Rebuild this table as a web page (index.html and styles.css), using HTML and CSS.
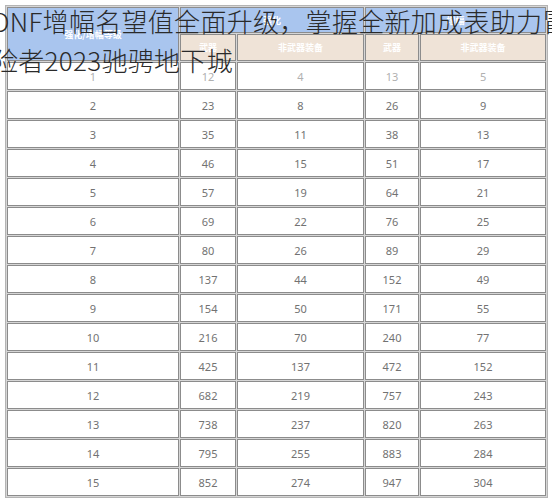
FILE: index.html
```html
<!DOCTYPE html>
<html lang="zh-CN">
<head>
<meta charset="utf-8">
<title>DNF增幅名望值</title>
<link rel="stylesheet" href="styles.css">
</head>
<body>
<div class="shot">
  <table class="grid">
    <colgroup>
      <col class="c1"><col class="c2"><col class="c3"><col class="c4"><col class="c5">
    </colgroup>
    <thead>
      <tr class="h1">
        <th class="blue" rowspan="2">强化/增幅等级</th>
        <th class="blue" colspan="2">强化</th>
        <th class="blue" colspan="2">增幅</th>
      </tr>
      <tr class="h2">
        <th class="beige">武器</th>
        <th class="beige">非武器装备</th>
        <th class="beige">武器</th>
        <th class="beige">非武器装备</th>
      </tr>
    </thead>
    <tbody>
      <tr class="faint"><td>1</td><td>12</td><td>4</td><td>13</td><td>5</td></tr>
      <tr><td>2</td><td>23</td><td>8</td><td>26</td><td>9</td></tr>
      <tr><td>3</td><td>35</td><td>11</td><td>38</td><td>13</td></tr>
      <tr><td>4</td><td>46</td><td>15</td><td>51</td><td>17</td></tr>
      <tr><td>5</td><td>57</td><td>19</td><td>64</td><td>21</td></tr>
      <tr><td>6</td><td>69</td><td>22</td><td>76</td><td>25</td></tr>
      <tr><td>7</td><td>80</td><td>26</td><td>89</td><td>29</td></tr>
      <tr><td>8</td><td>137</td><td>44</td><td>152</td><td>49</td></tr>
      <tr><td>9</td><td>154</td><td>50</td><td>171</td><td>55</td></tr>
      <tr><td>10</td><td>216</td><td>70</td><td>240</td><td>77</td></tr>
      <tr><td>11</td><td>425</td><td>137</td><td>472</td><td>152</td></tr>
      <tr><td>12</td><td>682</td><td>219</td><td>757</td><td>243</td></tr>
      <tr><td>13</td><td>738</td><td>237</td><td>820</td><td>263</td></tr>
      <tr><td>14</td><td>795</td><td>255</td><td>883</td><td>284</td></tr>
      <tr><td>15</td><td>852</td><td>274</td><td>947</td><td>304</td></tr>
    </tbody>
  </table>
  <h1 class="title">DNF增幅名望值全面升级，掌握全新加成表助力冒险者2023驰骋地下城</h1>
</div>
</body>
</html>
```

FILE: styles.css
```css
html, body {
  margin: 0;
  padding: 0;
  background: #ffffff;
}

.shot {
  position: relative;
  width: 552px;
  height: 500px;
  overflow: hidden;
  padding: 5px 0 0 5px;
  box-sizing: border-box;
}

.grid {
  table-layout: fixed;
  width: 543px;
  border-collapse: separate;
  border-spacing: 1px;
  border: 1px solid #b4b4b4;
  background: #d6d6d6;
  font-family: "Noto Sans", "Noto Sans CJK SC", sans-serif;
}

.c1 { width: 172px; }
.c2 { width: 56px; }
.c3 { width: 127px; }
.c4 { width: 54px; }
.c5 { width: 126px; }

.grid th,
.grid td {
  padding: 0;
  text-align: center;
  vertical-align: middle;
  border: 1px solid #8c8c8c;
  overflow: hidden;
  white-space: nowrap;
}

.grid th {
  color: #ffffff;
  font-size: 9px;
  font-weight: 700;
  font-family: "Noto Sans CJK SC", sans-serif;
}

.h1 { height: 26px; }
.h2 { height: 27px; }

.blue {
  background: #a9c5ee;
  border-color: #a9c5ee;
}

.beige {
  background: #efe3d7;
  border-color: #efe3d7;
}

.grid tbody tr { height: 28px; }

.grid td {
  background: #ffffff;
  color: #727272;
  font-size: 11px;
}

.grid tr.faint td {
  color: #b0b0b0;
}

.title {
  position: absolute;
  left: -8px;
  top: 1px;
  width: 592px;
  margin: 0;
  font-family: "Noto Sans CJK SC", sans-serif;
  font-size: 26px;
  font-weight: 300;
  letter-spacing: 0.3px;
  line-height: 39px;
  color: #2a2a2a;
}
```
